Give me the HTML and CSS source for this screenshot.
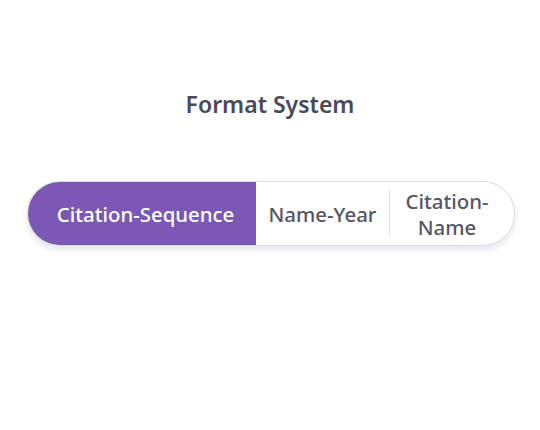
FILE: index.html
```html
<!DOCTYPE html>
<html>
<head>
<meta charset="utf-8">
<link rel="stylesheet" href="styles.css">
</head>
<body>
<main class="page">
  <h1 class="title">Format System</h1>
  <div class="segmented">
    <div class="seg seg-active seg-1">Citation-Sequence</div>
    <div class="seg seg-2">Name-Year</div>
    <div class="divider"></div>
    <div class="seg seg-3">Citation-<br>Name</div>
  </div>
</main>
</body>
</html>
```
FILE: styles.css
```css
html, body {
  margin: 0;
  padding: 0;
  background: #ffffff;
}
.page {
  width: 540px;
  height: 430px;
  display: flex;
  flex-direction: column;
  align-items: center;
  font-family: "Noto Sans", "Open Sans", sans-serif;
}
.title {
  margin: 88px 0 0 0;
  font-size: 23px;
  font-weight: 600;
  color: #4a4a58;
  line-height: 32px;
}
.segmented {
  margin-top: 61px;
  margin-left: 2px;
  width: 488px;
  height: 65px;
  box-sizing: border-box;
  display: flex;
  align-items: stretch;
  border: 1px solid #dcdce3;
  border-radius: 33px;
  background: #ffffff;
  box-shadow: 0 4px 6px rgba(60, 60, 110, 0.12);
  overflow: hidden;
}
.seg {
  display: flex;
  align-items: center;
  justify-content: center;
  text-align: center;
  font-size: 20.4px;
  font-weight: 550;
  color: #555566;
  line-height: 26px;
}
.seg-active {
  background: #7b58b6;
  color: #ffffff;
  margin: -1px 0 -1px -1px;
  border-radius: 33px 0 0 33px;
}
.seg-1 { width: 229px; padding-left: 8px; box-sizing: border-box; }
.seg-2 { width: 133px; }
.seg-3 { flex: 1; padding-right: 10px; }
.divider {
  width: 1px;
  margin: 8px 0;
  background: #e2e2e8;
}
```
